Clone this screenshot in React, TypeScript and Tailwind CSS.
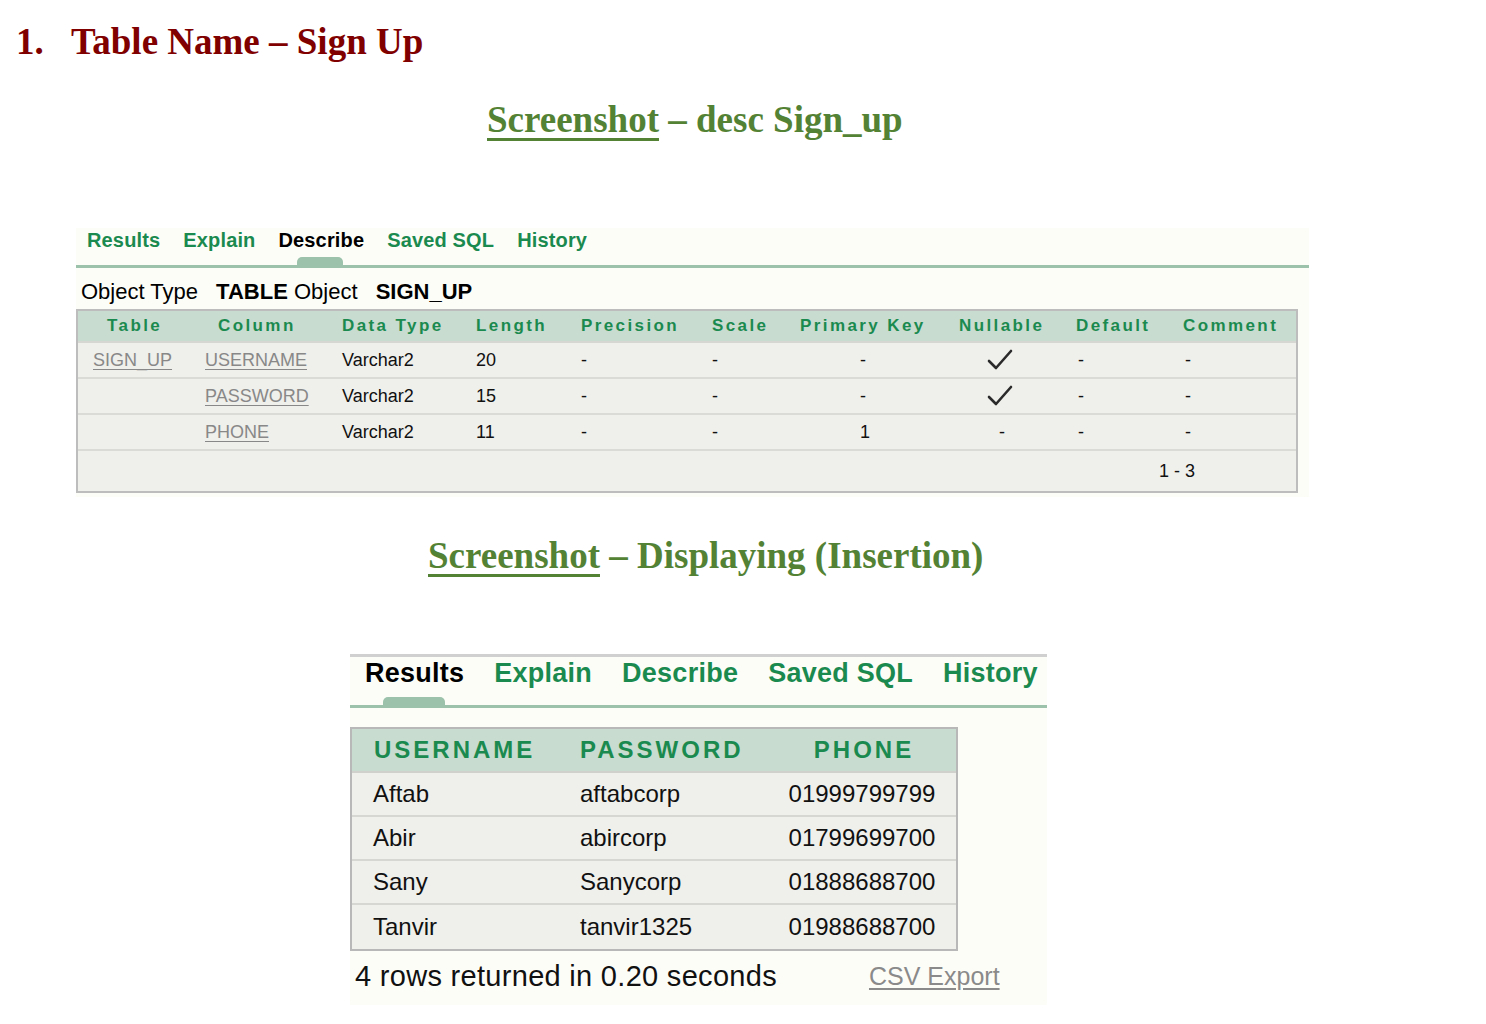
import React from "react"

const GREEN = "text-[#1b8a4f]"

const DESC_HEAD = ["Table", "Column", "Data Type", "Length", "Precision", "Scale", "Primary Key", "Nullable", "Default", "Comment"]
const DESC_HEAD_PAD = ["pl-[29px]", "pl-[23px]", "pl-[10px]", "pl-[10px]", "pl-[10px]", "pl-[10px]", "pl-[10px]", "pl-[10px]", "pl-[10px]", "pl-[10px]"]
const DESC_PAD = ["pl-[15px]", "pl-[10px]", "pl-[10px]", "pl-[10px]", "pl-[10px]", "pl-[10px]", "pl-[70px]", "pl-[50px]", "pl-[12px]", "pl-[12px]"]

const DESC_ROWS = [
  ["SIGN_UP", "USERNAME", "Varchar2", "20", "-", "-", "-", "check", "-", "-"],
  ["", "PASSWORD", "Varchar2", "15", "-", "-", "-", "check", "-", "-"],
  ["", "PHONE", "Varchar2", "11", "-", "-", "1", "-", "-", "-"],
]

const RESULT_ROWS = [
  ["Aftab", "aftabcorp", "01999799799"],
  ["Abir", "abircorp", "01799699700"],
  ["Sany", "Sanycorp", "01888688700"],
  ["Tanvir", "tanvir1325", "01988688700"],
]

const COLS = "grid grid-cols-[117px_137px_134px_105px_131px_88px_159px_117px_107px_123px]"

function Check() {
  return (
    <svg width="26" height="22" viewBox="0 0 26 22" className="-ml-[12px]">
      <path d="M2 12 L9 19 L24 2" fill="none" stroke="#2a2a2a" strokeWidth="2.6" strokeLinecap="round" strokeLinejoin="round" />
    </svg>
  )
}

function Tabs({ active, big }: { active: string; big?: boolean }) {
  const tabs = ["Results", "Explain", "Describe", "Saved SQL", "History"]
  return (
    <div className={`flex font-bold ${big ? "gap-[30px] text-[27px] tracking-[0.25px]" : "gap-[23px] text-[20px] tracking-[0.15px]"}`}>
      {tabs.map((t) => (
        <span key={t} className={t === active ? "text-black" : GREEN}>{t}</span>
      ))}
    </div>
  )
}

export default function App() {
  return (
    <div className="min-h-[1024px] w-[1486px] bg-white font-['Liberation_Sans',Arial,sans-serif]">
      {/* Heading */}
      <h1 className="flex pl-[16px] pt-[18px] font-['Liberation_Serif','Times_New_Roman',serif] text-[37px] font-bold leading-[48px] text-[#800000]">
        <span className="w-[55px]">1.</span>
        <span>Table Name – Sign Up</span>
      </h1>

      <h2 className="mt-[30px] pl-[487px] font-['Liberation_Serif','Times_New_Roman',serif] text-[37px] font-bold leading-[48px] text-[#548235]">
        <span className="underline decoration-[3px] underline-offset-[6px]">Screenshot</span> – desc Sign_up
      </h2>

      {/* desc panel */}
      <div className="ml-[76px] mt-[84px] w-[1233px] bg-[#fdfdf8] pb-[4px]">
        <div className="pl-[11px] leading-[24px]">
          <Tabs active="Describe" />
        </div>
        <div className="ml-[221px] mt-[5px] h-[8px] w-[46px] rounded-t-[5px] bg-[#9cc2ab]" />
        <div className="h-[3px] bg-[#9cc2ab]" />
        <div className="pl-[5px] pt-[11px] text-[22px] leading-[26px] text-black">
          Object Type <b className="ml-[12px]">TABLE</b> Object <b className="ml-[12px]">SIGN_UP</b>
        </div>
        <div className="mt-[4px] w-[1222px] border-2 border-[#bdbdbd] bg-[#efefeb]">
          <div className={`${COLS} h-[32px] items-center border-b-2 border-[#d6d6d2] bg-[#c8dcd0] text-[17px] font-bold tracking-[2.4px] ${GREEN}`}>
            {DESC_HEAD.map((h, i) => (
              <div key={h} className={DESC_HEAD_PAD[i]}>{h}</div>
            ))}
          </div>
          {DESC_ROWS.map((row, r) => (
            <div key={r} className={`${COLS} h-[36px] items-center border-b-2 border-[#dadad6] text-[18px] text-[#111]`}>
              {row.map((c, i) => (
                <div key={i} className={DESC_PAD[i]}>
                  {c === "check" ? (
                    <Check />
                  ) : i < 2 ? (
                    <span className="text-[#888] underline underline-offset-[3px]">{c}</span>
                  ) : (
                    c
                  )}
                </div>
              ))}
            </div>
          ))}
          <div className="flex h-[40px] items-center justify-end pr-[101px] text-[18px] text-[#111]">1 - 3</div>
        </div>
      </div>

      <h2 className="mt-[35px] pl-[428px] font-['Liberation_Serif','Times_New_Roman',serif] text-[37px] font-bold leading-[48px] text-[#548235]">
        <span className="underline decoration-[3px] underline-offset-[6px]">Screenshot</span> – Displaying (Insertion)
      </h2>

      {/* results panel */}
      <div className="ml-[350px] mt-[74px] w-[697px] bg-[#fdfdf8] pb-[12px]">
        <div className="h-[3px] bg-[#d0d0d0]" />
        <div className="pl-[15px] pt-[1px] leading-[30px]">
          <Tabs active="Results" big />
        </div>
        <div className="ml-[33px] mt-[9px] h-[8px] w-[62px] rounded-t-[5px] bg-[#9cc2ab]" />
        <div className="h-[3px] bg-[#9cc2ab]" />

        <div className="mt-[19px] w-[608px] border-2 border-[#b8b8b8] bg-[#efefeb]">
          <div className={`grid h-[44px] grid-cols-[215px_205px_1fr] items-center border-b-2 border-[#d0d0cc] bg-[#c8dcd0] text-[24px] font-bold tracking-[3px] ${GREEN}`}>
            <div className="pl-[22px]">USERNAME</div>
            <div className="pl-[13px]">PASSWORD</div>
            <div className="text-center">PHONE</div>
          </div>
          {RESULT_ROWS.map((row, r) => (
            <div
              key={r}
              className={`grid h-[44px] grid-cols-[215px_205px_1fr] items-center text-[24px] text-[#111] ${r < RESULT_ROWS.length - 1 ? "border-b-2 border-[#d6d6d2]" : ""}`}
            >
              <div className="pl-[21px]">{row[0]}</div>
              <div className="pl-[13px]">{row[1]}</div>
              <div className="pr-[4px] text-center">{row[2]}</div>
            </div>
          ))}
        </div>

        <div className="mt-[8px] flex items-center">
          <span className="pl-[5px] text-[29px] leading-[34px] tracking-[0.3px] text-[#111]">4 rows returned in 0.20 seconds</span>
          <span className="ml-[92px] text-[25px] leading-[34px] text-[#8a8a8a] underline underline-offset-[3px]">CSV Export</span>
        </div>
      </div>
    </div>
  )
}
